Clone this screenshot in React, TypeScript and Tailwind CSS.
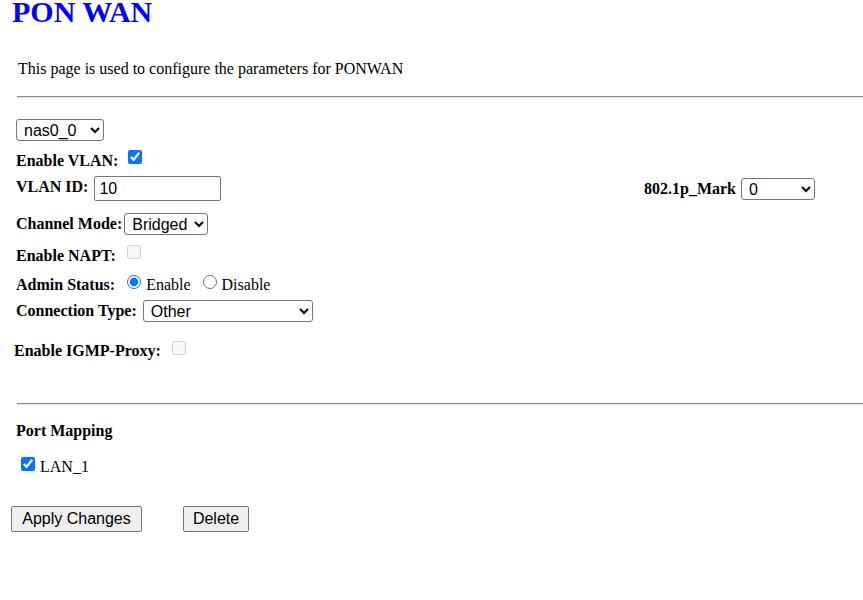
import { useState } from "react"

const labelStyle = "font-bold text-[16px] leading-[18px] whitespace-nowrap"
const ctrlFont = "font-['Liberation_Sans',Arial,sans-serif] text-[16px] text-black"
const selectStyle = `${ctrlFont} h-[22px] bg-white border border-[#767676] rounded-[3px] pl-[3px]`

const App = () => {
  const [vlan, setVlan] = useState(true)
  const [admin, setAdmin] = useState("enable")
  const [lan1, setLan1] = useState(true)

  return (
    <div className="font-['Liberation_Serif','Times_New_Roman',serif] text-black bg-white w-[863px] h-[600px] overflow-hidden">
      <div className="h-[24px] pt-[1px]">
        <h1 className="ml-[12px] text-[30px] leading-[22px] font-bold text-[#0000ff]">PON WAN</h1>
      </div>
      <p className="ml-[18px] mt-[36px] text-[16px] leading-[18px]">This page is used to configure the parameters for PONWAN</p>
      <div className="ml-[17px] mt-[18px] border-t border-[#8a8a8a] border-b border-b-[#e4e4e4]" />

      <div className="ml-[16px] mt-[21px] flex">
        <select className={`${selectStyle} w-[88px]`} defaultValue="nas0_0">
          <option>nas0_0</option>
        </select>
      </div>

      <div className="ml-[16px] mt-[9px] flex items-start h-[20px]">
        <span className={`${labelStyle} mt-[2px]`}>Enable VLAN:</span>
        <input type="checkbox" checked={vlan} onChange={() => setVlan(!vlan)} className="ml-[10px] w-[14px] h-[14px]" />
      </div>

      <div className="ml-[16px] mt-[6px] flex items-start h-[25px]">
        <span className={`${labelStyle} mt-[2px]`}>VLAN ID:</span>
        <input type="text" defaultValue="10" className={`${ctrlFont} ml-[6px] w-[127px] h-[25px] border border-[#767676] rounded-[2px] px-[4px] bg-white`} />
        <div className="ml-auto mr-[48px] flex items-start mt-[2px]">
          <span className={`${labelStyle} mt-[2px]`}>802.1p_Mark</span>
          <select className={`${selectStyle} ml-[5px] w-[74px]`} defaultValue="0">
            <option>0</option>
          </select>
        </div>
      </div>

      <div className="ml-[16px] mt-[12px] flex items-start h-[22px]">
        <span className={`${labelStyle} mt-[2px]`}>Channel Mode:</span>
        <select className={`${selectStyle} ml-[2px] w-[84px]`} defaultValue="Bridged">
          <option>Bridged</option>
        </select>
      </div>

      <div className="ml-[16px] mt-[10px] flex items-start h-[20px]">
        <span className={`${labelStyle} mt-[2px]`}>Enable NAPT:</span>
        <input type="checkbox" disabled className="ml-[11px] w-[14px] h-[14px]" />
      </div>

      <div className="ml-[16px] mt-[10px] flex items-start h-[18px] text-[16px] leading-[18px]">
        <span className={`${labelStyle} mt-[1px]`}>Admin Status:</span>
        <input type="radio" name="admin" checked={admin === "enable"} onChange={() => setAdmin("enable")} className="ml-[12px] w-[14px] h-[14px]" />
        <span className="ml-[5px] mt-[1px]">Enable</span>
        <input type="radio" name="admin" checked={admin === "disable"} onChange={() => setAdmin("disable")} className="ml-[12px] w-[14px] h-[14px]" />
        <span className="ml-[5px] mt-[1px]">Disable</span>
      </div>

      <div className="ml-[16px] mt-[7px] flex items-start h-[22px]">
        <span className={`${labelStyle} mt-[2px]`}>Connection Type:</span>
        <select className={`${selectStyle} ml-[6px] w-[170px]`} defaultValue="Other">
          <option>Other</option>
        </select>
      </div>

      <div className="ml-[14px] mt-[19px] flex items-start h-[19px]">
        <span className={`${labelStyle} mt-[1px]`}>Enable IGMP-Proxy:</span>
        <input type="checkbox" disabled className="ml-[11px] w-[14px] h-[14px]" />
      </div>

      <div className="ml-[17px] mt-[43px] border-t border-[#8a8a8a] border-b border-b-[#e4e4e4]" />

      <p className={`${labelStyle} ml-[16px] mt-[17px]`}>Port Mapping</p>

      <div className="ml-[21px] mt-[17px] flex items-start h-[19px] text-[16px] leading-[18px]">
        <input type="checkbox" checked={lan1} onChange={() => setLan1(!lan1)} className="w-[14px] h-[14px]" />
        <span className="ml-[5px] mt-[1px]">LAN_1</span>
      </div>

      <div className="ml-[11px] mt-[30px] flex items-start">
        <button className={`${ctrlFont} w-[131px] h-[26px] bg-[#efefef] border border-[#767676] rounded-[2px]`}>Apply Changes</button>
        <button className={`${ctrlFont} ml-[41px] w-[66px] h-[26px] bg-[#efefef] border border-[#767676] rounded-[2px]`}>Delete</button>
      </div>
    </div>
  )
}

export default App
